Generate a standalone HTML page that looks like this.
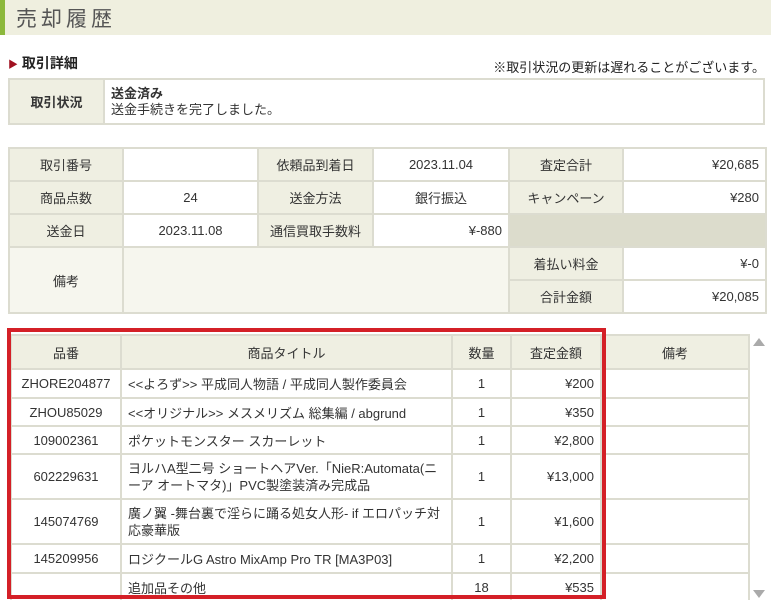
<!DOCTYPE html>
<html><head><meta charset="utf-8"><style>
*{margin:0;padding:0;box-sizing:border-box}
body{width:771px;height:605px;overflow:hidden;background:#fff;font-family:"Liberation Sans","Noto Sans CJK JP",sans-serif;font-size:12px;color:#333;position:relative}
.hd{position:absolute;left:0;top:0;width:771px;height:35px;background:#efefdf;border-left:5px solid #8cb83c}
.hd span{position:absolute;left:11px;top:3px;font-size:21px;color:#555;letter-spacing:4px;font-family:"Noto Sans CJK JP",sans-serif}
.ab{position:absolute}
table{border-collapse:collapse;table-layout:fixed;position:absolute}
td{border:2px solid #dcdcd0;text-align:center;vertical-align:middle;padding:0 6px;background:#fff;font-size:13px}
td.l{background:#efefe2}
td.r{text-align:right}
td.t{text-align:left}
td.g{background:#dcdccc}
td.p{background:#f6f6ee}
</style></head><body>
<div class="hd"><span>売却履歴</span></div>
<div class="ab" style="left:8px;top:53px;font-size:14px;font-weight:bold;color:#222"><span style="color:#a01020;font-size:10px">▶</span> 取引詳細</div>
<div class="ab" style="right:6px;top:57px;font-size:13px;color:#222">※取引状況の更新は遅れることがございます。</div>
<table style="left:8px;top:78px;width:757px;height:47px">
<col style="width:95px"><col>
<tr><td class="l" style="font-weight:bold;font-size:13px">取引状況</td><td class="t" style="line-height:16px"><b style="font-size:13px">送金済み</b><br>送金手続きを完了しました。</td></tr>
</table>
<table style="left:8px;top:147px;width:757px">
<col style="width:114px"><col style="width:135px"><col style="width:115px"><col style="width:136px"><col style="width:114px"><col style="width:143px">
<tr style="height:33px"><td class="l">取引番号</td><td></td><td class="l">依頼品到着日</td><td>2023.11.04</td><td class="l">査定合計</td><td class="r">¥20,685</td></tr>
<tr style="height:33px"><td class="l">商品点数</td><td>24</td><td class="l">送金方法</td><td>銀行振込</td><td class="l">キャンペーン</td><td class="r">¥280</td></tr>
<tr style="height:33px"><td class="l">送金日</td><td>2023.11.08</td><td class="l">通信買取手数料</td><td class="r">¥-880</td><td class="g" colspan="2"></td></tr>
<tr style="height:33px"><td class="l p" rowspan="2">備考</td><td class="p" colspan="3" rowspan="2"></td><td class="l">着払い料金</td><td class="r">¥-0</td></tr>
<tr style="height:33px"><td class="l">合計金額</td><td class="r">¥20,085</td></tr>
</table>
<div class="ab" style="left:9px;top:334px;width:742px;height:266px;overflow:hidden">
<table style="left:1px;top:0;width:738px">
<col style="width:110px"><col style="width:331px"><col style="width:59px"><col style="width:90px"><col style="width:148px">
<tr style="height:34px"><td class="l">品番</td><td class="l">商品タイトル</td><td class="l">数量</td><td class="l">査定金額</td><td class="l">備考</td></tr>
<tr style="height:29px"><td>ZHORE204877</td><td class="t">&lt;&lt;よろず&gt;&gt; 平成同人物語 / 平成同人製作委員会</td><td>1</td><td class="r">¥200</td><td></td></tr>
<tr style="height:28px"><td>ZHOU85029</td><td class="t">&lt;&lt;オリジナル&gt;&gt; メスメリズム 総集編 / abgrund</td><td>1</td><td class="r">¥350</td><td></td></tr>
<tr style="height:28px"><td>109002361</td><td class="t">ポケットモンスター スカーレット</td><td>1</td><td class="r">¥2,800</td><td></td></tr>
<tr style="height:45px"><td>602229631</td><td class="t" style="line-height:17px">ヨルハA型二号 ショートヘアVer.「NieR:Automata(ニーア オートマタ)」PVC製塗装済み完成品</td><td>1</td><td class="r">¥13,000</td><td></td></tr>
<tr style="height:45px"><td>145074769</td><td class="t" style="line-height:17px">廣ノ翼 -舞台裏で淫らに踊る処女人形- if エロパッチ対応豪華版</td><td>1</td><td class="r">¥1,600</td><td></td></tr>
<tr style="height:29px"><td>145209956</td><td class="t">ロジクールG Astro MixAmp Pro TR [MA3P03]</td><td>1</td><td class="r">¥2,200</td><td></td></tr>
<tr style="height:28px"><td></td><td class="t">追加品その他</td><td>18</td><td class="r">¥535</td><td></td></tr>
</table></div>
<div class="ab" style="left:7px;top:328px;width:599px;height:271px;border:4px solid #d42027"></div>
<div class="ab" style="left:753px;top:338px;width:0;height:0;border-left:6px solid transparent;border-right:6px solid transparent;border-bottom:8px solid #aaa"></div>
<div class="ab" style="left:753px;top:590px;width:0;height:0;border-left:6px solid transparent;border-right:6px solid transparent;border-top:8px solid #aaa"></div>
</body></html>
